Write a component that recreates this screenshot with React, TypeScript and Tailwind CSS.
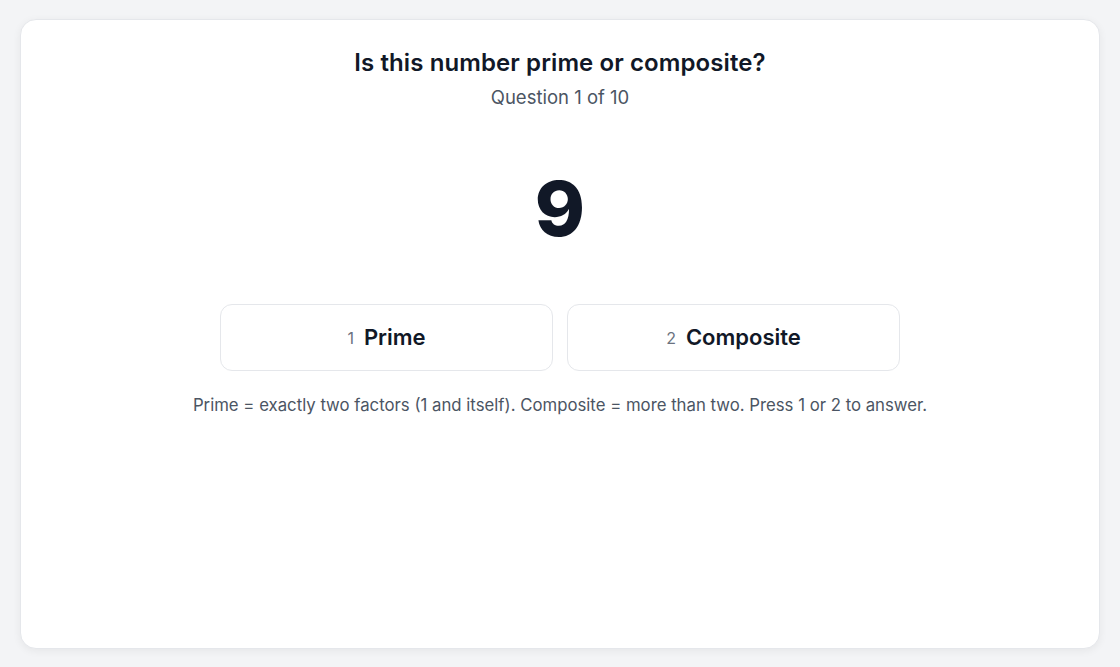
import React from "react";

export default function App() {
  return (
    <div
      className="min-h-screen w-full bg-[#f3f4f6] p-[19px] px-[20px]"
      style={{ fontFamily: "Inter, 'Noto Sans', sans-serif" }}
    >
      <div className="h-[630px] rounded-[16px] border border-[#e5e7eb] bg-white shadow-[0_2px_8px_rgba(0,0,0,0.06)] flex flex-col items-center pt-[29px]">
        <h1 className="text-[24px] leading-[32px] font-semibold text-[#111827] -mt-[2px] tracking-[0.1px]">
          Is this number prime or composite?
        </h1>
        <p className="mt-[6px] text-[18.5px] leading-[24px] text-[#4b5563]">Question 1 of 10</p>
        <div className="mt-[49px] text-[76px] leading-[100px] font-extrabold text-[#111827]">9</div>
        <div className="mt-[46px] grid grid-cols-2 gap-[14px] w-[680px]">
          <button className="h-[67px] rounded-[12px] border border-[#e5e7eb] bg-white flex items-center justify-center gap-[10px]">
            <span className="text-[16px] text-[#6b7280]">1</span>
            <span className="text-[22px] font-semibold text-[#111827]">Prime</span>
          </button>
          <button className="h-[67px] rounded-[12px] border border-[#e5e7eb] bg-white flex items-center justify-center gap-[10px]">
            <span className="text-[16px] text-[#6b7280]">2</span>
            <span className="text-[22px] font-semibold text-[#111827]">Composite</span>
          </button>
        </div>
        <p className="mt-[22px] text-[16.75px] leading-[24px] text-[#4b5563]">
          Prime = exactly two factors (1 and itself). Composite = more than two. Press 1 or 2 to answer.
        </p>
      </div>
    </div>
  );
}
